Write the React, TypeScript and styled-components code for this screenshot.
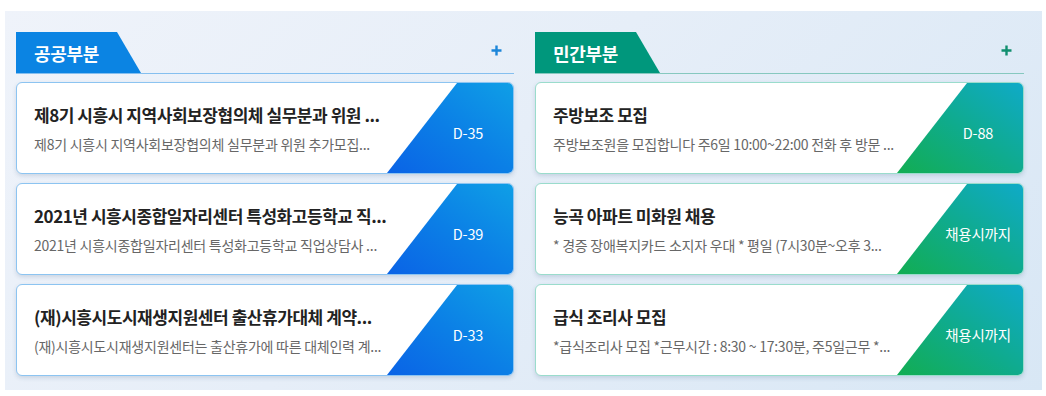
import React from "react";
import styled, { createGlobalStyle } from "styled-components";

const GlobalStyle = createGlobalStyle`
  html, body { margin: 0; padding: 0; background: #ffffff; }
  body { font-family: "Noto Sans CJK KR", "Noto Sans", sans-serif; }
  * { box-sizing: border-box; }
`;

type Tone = "blue" | "green";

const palette = {
  blue: {
    tab: "#0b84e3",
    line: "#85bfef",
    plus: "#1c86d9",
    border: "#8cc4f1",
    grad: "linear-gradient(to bottom left, #0f9fe6 0%, #0b7fe6 50%, #0a63e6 100%)",
  },
  green: {
    tab: "#00977c",
    line: "#86c8bf",
    plus: "#118f6f",
    border: "#9adccc",
    grad: "linear-gradient(to bottom left, #0faac8 0%, #0fab8d 50%, #12ad52 100%)",
  },
};

const Panel = styled.div`
  margin: 11px 4px 6px 5px;
  width: 1037px;
  padding: 21px 19px 14px 11px;
  display: grid;
  grid-template-columns: 498px 489px;
  column-gap: 21px;
  background: linear-gradient(135deg, #eff3fa 0%, #e6eef8 45%, #d8e7f5 100%);
`;

const Column = styled.section`
  display: flex;
  flex-direction: column;
`;

const Header = styled.div<{ $tone: Tone }>`
  height: 42px;
  display: flex;
  align-items: flex-start;
  justify-content: space-between;
  border-bottom: 1px solid ${(p) => palette[p.$tone].line};
`;

const Tab = styled.h2<{ $tone: Tone }>`
  margin: 0;
  width: 125px;
  height: 41px;
  padding-left: 18px;
  display: flex;
  align-items: center;
  background: ${(p) => palette[p.$tone].tab};
  clip-path: polygon(0 0, 101px 0, 100% 100%, 0 100%);
  color: #ffffff;
  font-size: 18px;
  font-weight: 700;
  letter-spacing: -0.3px;
`;

const PlusButton = styled.button<{ $tone: Tone }>`
  margin: 12px 11px 0 0;
  width: 13px;
  height: 13px;
  padding: 0;
  border: 0;
  background: transparent;
  color: ${(p) => palette[p.$tone].plus};
  display: flex;
  align-items: center;
  justify-content: center;
  cursor: pointer;
`;

const CardList = styled.ul`
  list-style: none;
  margin: 8px 0 0;
  padding: 0;
  display: flex;
  flex-direction: column;
  gap: 9px;
`;

const Card = styled.li<{ $tone: Tone }>`
  height: 92px;
  display: flex;
  background: #ffffff;
  border: 1px solid ${(p) => palette[p.$tone].border};
  border-radius: 6px;
  overflow: hidden;
  box-shadow: 0 2px 4px rgba(40, 70, 110, 0.16);
`;

const Content = styled.div`
  flex: 1;
  min-width: 0;
  padding-left: 17px;
  display: flex;
  flex-direction: column;
  justify-content: center;
  gap: 8px;
`;

const Title = styled.h3`
  margin: 0;
  font-size: 17px;
  line-height: 23px;
  font-weight: 700;
  color: #222222;
  letter-spacing: -0.45px;
  white-space: nowrap;
`;

const Desc = styled.p`
  margin: 0;
  font-size: 14px;
  line-height: 20px;
  color: #676767;
  letter-spacing: -0.25px;
  white-space: nowrap;
`;

const Badge = styled.div<{ $tone: Tone }>`
  position: relative;
  width: 126px;
  flex: none;
  padding: 8px 0 0 36px;
  display: flex;
  align-items: center;
  justify-content: center;
  background: ${(p) => palette[p.$tone].grad};
  clip-path: polygon(70px 0, 100% 0, 100% 100%, 0 100%);
  color: #ffffff;
  font-size: 14.5px;
  letter-spacing: -0.2px;
  white-space: nowrap;
`;

type Item = { title: string; desc: string; label: string };

const publicItems: Item[] = [
  {
    title: "제8기 시흥시 지역사회보장협의체 실무분과 위원 ...",
    desc: "제8기 시흥시 지역사회보장협의체 실무분과 위원 추가모집...",
    label: "D-35",
  },
  {
    title: "2021년 시흥시종합일자리센터 특성화고등학교 직...",
    desc: "2021년 시흥시종합일자리센터 특성화고등학교 직업상담사 ...",
    label: "D-39",
  },
  {
    title: "(재)시흥시도시재생지원센터 출산휴가대체 계약...",
    desc: "(재)시흥시도시재생지원센터는 출산휴가에 따른 대체인력 계...",
    label: "D-33",
  },
];

const privateItems: Item[] = [
  {
    title: "주방보조 모집",
    desc: "주방보조원을 모집합니다 주6일 10:00~22:00 전화 후 방문 ...",
    label: "D-88",
  },
  {
    title: "능곡 아파트 미화원 채용",
    desc: "* 경증 장애복지카드 소지자 우대 * 평일 (7시30분~오후 3...",
    label: "채용시까지",
  },
  {
    title: "급식 조리사 모집",
    desc: "*급식조리사 모집 *근무시간 : 8:30 ~ 17:30분, 주5일근무 *...",
    label: "채용시까지",
  },
];

const PlusIcon = () => (
  <svg width="13" height="13" viewBox="0 0 13 13" aria-hidden="true">
    <path d="M6.5 1.5v10M1.5 6.5h10" stroke="currentColor" strokeWidth="2.4" strokeLinecap="butt" />
  </svg>
);

const Board = ({ tone, name, items }: { tone: Tone; name: string; items: Item[] }) => (
  <Column>
    <Header $tone={tone}>
      <Tab $tone={tone}>{name}</Tab>
      <PlusButton $tone={tone} aria-label="더보기">
        <PlusIcon />
      </PlusButton>
    </Header>
    <CardList>
      {items.map((it, i) => (
        <Card key={i} $tone={tone}>
          <Content>
            <Title>{it.title}</Title>
            <Desc>{it.desc}</Desc>
          </Content>
          <Badge $tone={tone}>{it.label}</Badge>
        </Card>
      ))}
    </CardList>
  </Column>
);

export default function App() {
  return (
    <>
      <GlobalStyle />
      <Panel>
        <Board tone="blue" name="공공부분" items={publicItems} />
        <Board tone="green" name="민간부분" items={privateItems} />
      </Panel>
    </>
  );
}
